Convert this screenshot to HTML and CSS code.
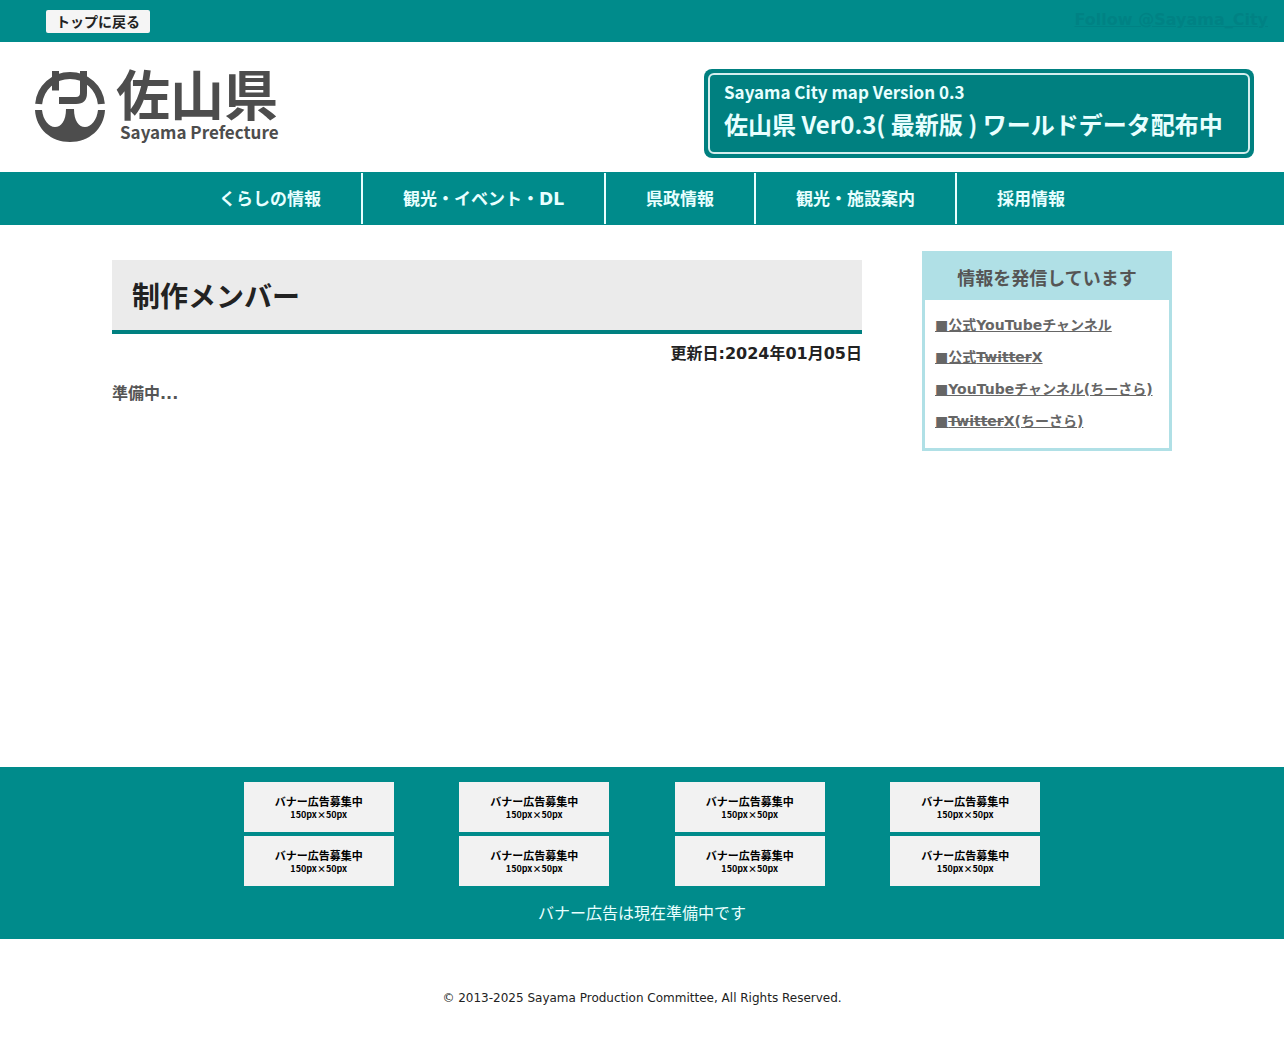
FILE: index.html
```html
<!DOCTYPE html>
<html lang="ja">
<head>
<meta charset="utf-8">
<meta name="viewport" content="width=device-width, initial-scale=1">
<title>制作メンバー | 佐山県</title>
<link rel="stylesheet" href="styles.css">
</head>
<body>
<div class="topbar">
  <button class="back" type="button">トップに戻る</button>
  <a class="follow" href="#">Follow @Sayama_City</a>
</div>
<header class="header">
  <a class="logo" href="#">
    <svg class="logo-mark" viewBox="0 0 70 74" aria-hidden="true">
      <g fill="none" stroke="#4d4d4d">
        <path d="M3.640 35A31.500 31.500 0 0 1 66.360 35" stroke-width="7"/>
        <path d="M20.500 2V21.500M48.500 2V24Q48.500 31.500 41 31.500H24" stroke-width="7"/>
      </g>
      <path fill="#4d4d4d" d="M0 41H7C8 51 14 58 20 58C26 58 31 52 31 40H39C39 52 44 58 50 58C56 58 62 51 63 41H70C69 60 54 73 35 73S1 60 0 41Z"/>
    </svg>
    <span class="logo-text">
      <span class="logo-name">佐山県</span>
      <span class="logo-sub">Sayama Prefecture</span>
    </span>
  </a>
  <a class="promo" href="#">
    <span class="promo-inner">
      <span class="promo-small">Sayama City map Version 0.3</span>
      <span class="promo-large">佐山県 Ver0.3( 最新版 ) ワールドデータ配布中</span>
    </span>
  </a>
</header>
<nav class="nav">
  <a href="#">くらしの情報</a>
  <a href="#">観光・イベント・DL</a>
  <a href="#">県政情報</a>
  <a href="#">観光・施設案内</a>
  <a href="#">採用情報</a>
</nav>
<div class="content">
  <main class="main">
    <h1>制作メンバー</h1>
    <p class="updated">更新日:2024年01月05日</p>
    <p class="body-text">準備中...</p>
  </main>
  <aside class="side">
    <h2>情報を発信しています</h2>
    <ul>
      <li><a href="#">■公式YouTubeチャンネル</a></li>
      <li><a href="#">■公式<s>Twitter</s>X</a></li>
      <li><a href="#">■YouTubeチャンネル(ちーさら)</a></li>
      <li><a href="#">■<s>Twitter</s>X(ちーさら)</a></li>
    </ul>
  </aside>
</div>
<section class="ads">
  <div class="ad-grid">
    <a class="ad" href="#">バナー広告募集中<small>150px×50px</small></a>
    <a class="ad" href="#">バナー広告募集中<small>150px×50px</small></a>
    <a class="ad" href="#">バナー広告募集中<small>150px×50px</small></a>
    <a class="ad" href="#">バナー広告募集中<small>150px×50px</small></a>
    <a class="ad" href="#">バナー広告募集中<small>150px×50px</small></a>
    <a class="ad" href="#">バナー広告募集中<small>150px×50px</small></a>
    <a class="ad" href="#">バナー広告募集中<small>150px×50px</small></a>
    <a class="ad" href="#">バナー広告募集中<small>150px×50px</small></a>
  </div>
  <p>バナー広告は現在準備中です</p>
</section>
<footer class="footer">© 2013-2025 Sayama Production Committee, All Rights Reserved.</footer>
</body>
</html>
```
FILE: styles.css
```css
* { box-sizing: border-box; }
body {
  margin: 0;
  min-height: 100vh;
  display: flex;
  flex-direction: column;
  background: #fff;
  color: #222;
  font-family: "DejaVu Sans", "Noto Sans CJK JP", sans-serif;
  font-size: 16px;
}
h1, h2, p, ul { margin: 0; padding: 0; }
.topbar {
  display: flex;
  justify-content: space-between;
  align-items: flex-start;
  padding: 10px 16px 9px 46px;
  background: #008b8b;
}
.back {
  height: 23px;
  padding: 2px 10px 0;
  border: 0;
  border-radius: 2px;
  background: #f5f5f5;
  color: #222;
  font: bold 14px/21px "DejaVu Sans", "Noto Sans CJK JP", sans-serif;
}
.follow {
  color: #008284;
  font-weight: bold;
  line-height: 20px;
}
.header {
  display: flex;
  justify-content: space-between;
  align-items: flex-start;
  padding: 27px 30px 14px 35px;
}
.logo {
  display: flex;
  gap: 11px;
  color: #4d4d4d;
  text-decoration: none;
  font-family: "Noto Sans CJK JP", sans-serif;
  font-weight: bold;
}
.logo-mark { width: 70px; height: 74px; }
.logo-text { display: flex; flex-direction: column; }
.logo-name { font-size: 54px; line-height: 48px; }
.logo-sub { padding: 4px 0 0 4px; font-size: 17px; line-height: 22px; }
.promo {
  padding: 4px;
  border-radius: 8px;
  background: #008080;
  color: #e8ffff;
  text-decoration: none;
  font-family: "Noto Sans CJK JP", sans-serif;
  font-weight: bold;
}
.promo-inner {
  display: flex;
  flex-direction: column;
  width: 542px;
  height: 81px;
  padding: 5px 14px;
  border: 2px solid #d5eeee;
  border-radius: 6px;
}
.promo-small { font-size: 17px; line-height: 24px; }
.promo-large { font-size: 24px; line-height: 40px; white-space: nowrap; }
.nav {
  display: flex;
  justify-content: center;
  padding: 1px 0;
  background: #008b8b;
}
.nav a {
  padding: 2px 40px 0;
  color: #e8ffff;
  font-size: 17px;
  font-weight: bold;
  line-height: 49px;
  text-decoration: none;
}
.nav a + a { border-left: 2px solid #e8ffff; }
.content {
  display: flex;
  flex: 1;
  align-items: flex-start;
  gap: 60px;
  width: 100%;
  max-width: 1060px;
  margin: 0 auto;
  padding: 26px 0 40px;
}
.main { flex: 1; padding-top: 9px; font-weight: bold; }
h1 {
  padding: 6px 20px 0;
  border-bottom: 4px solid #008080;
  background: #ebebeb;
  font-size: 28px;
  line-height: 64px;
}
.updated { padding-top: 8px; text-align: right; line-height: 24px; }
.body-text { padding-top: 16px; color: #555; line-height: 24px; }
.side { width: 250px; border: 3px solid #b0e0e6; }
.side h2 {
  padding-top: 4px;
  background: #b0e0e6;
  color: #555;
  font-size: 18px;
  line-height: 42px;
  text-align: center;
}
.side ul { padding: 9px 10px 11px; list-style: none; }
.side li { font-size: 14px; font-weight: bold; line-height: 32px; }
.side a { color: #666; }
.ads {
  padding: 15px 0 11px;
  background: #008b8b;
  color: #e8ffff;
  text-align: center;
}
.ad-grid {
  display: grid;
  grid-template-columns: repeat(4, 1fr);
  justify-items: center;
  row-gap: 4px;
  max-width: 862px;
  margin: 0 auto;
}
.ad {
  display: flex;
  flex-direction: column;
  justify-content: center;
  width: 150px;
  height: 50px;
  padding-top: 1px;
  background: #f2f2f2;
  color: #000;
  font: bold 11px/13px "Noto Sans CJK JP", sans-serif;
  text-decoration: none;
}
.ad small { font-size: 9px; }
.ads p { padding-top: 14px; line-height: 28px; }
.footer {
  padding: 49px 20px 47px;
  font-size: 12px;
  line-height: 20px;
  text-align: center;
}
```
